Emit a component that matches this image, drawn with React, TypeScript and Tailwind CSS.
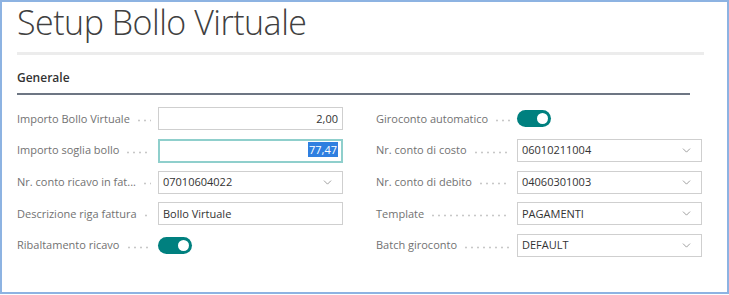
import { ChevronDown } from 'lucide-react';

type Field =
    | { label: string; kind: 'text'; value: string; align?: 'right'; focused?: boolean }
    | { label: string; kind: 'select'; value: string }
    | { label: string; kind: 'toggle' };

const leftFields: Field[] = [
    { label: 'Importo Bollo Virtuale', kind: 'text', value: '2,00', align: 'right' },
    { label: 'Importo soglia bollo', kind: 'text', value: '77,47', align: 'right', focused: true },
    { label: 'Nr. conto ricavo in fat...', kind: 'select', value: '07010604022' },
    { label: 'Descrizione riga fattura', kind: 'text', value: 'Bollo Virtuale' },
    { label: 'Ribaltamento ricavo', kind: 'toggle' },
];

const rightFields: Field[] = [
    { label: 'Giroconto automatico', kind: 'toggle' },
    { label: 'Nr. conto di costo', kind: 'select', value: '06010211004' },
    { label: 'Nr. conto di debito', kind: 'select', value: '04060301003' },
    { label: 'Template', kind: 'select', value: 'PAGAMENTI' },
    { label: 'Batch giroconto', kind: 'select', value: 'DEFAULT' },
];

function Toggle() {
    return (
        <div className="w-[34px] h-[17px] rounded-full bg-[#00807f] flex items-center justify-end pr-[3px]">
            <span className="w-[11px] h-[11px] rounded-full bg-white" />
        </div>
    );
}

function FieldRow({ field }: { field: Field }) {
    return (
        <div className="flex items-center h-[31.7px]">
            {/* Label + dotted leader */}
            <div className="w-[141px] shrink-0 flex items-center pr-[7px]">
                <span className="text-[11px] text-[#727272] whitespace-nowrap">{field.label}</span>
                <span className="flex-1 ml-[6px] mt-[3px] h-[3px] bg-[radial-gradient(circle,#c8c8c8_0.9px,transparent_1.2px)] bg-[length:6px_3px] bg-repeat-x" />
            </div>

            {field.kind === 'toggle' && <Toggle />}

            {field.kind === 'text' && (
                <div
                    className={
                        field.focused
                            ? 'w-[185px] h-[24px] border-2 border-[#8fcfcc] flex items-center px-[3px] text-[11px] text-[#333]'
                            : 'w-[185px] h-[23px] border border-[#cfcfcf] flex items-center px-[4px] text-[11px] text-[#333]'
                    }
                >
                    <span className={field.align === 'right' ? 'ml-auto' : ''}>
                        {field.focused ? (
                            <span className="bg-[#2f7fe0] text-white px-[1px]">{field.value}</span>
                        ) : (
                            field.value
                        )}
                    </span>
                </div>
            )}

            {field.kind === 'select' && (
                <div className="w-[185px] h-[23px] border border-[#cfcfcf] flex items-center justify-between pl-[4px] pr-[8px] text-[11px] text-[#333]">
                    <span>{field.value}</span>
                    <ChevronDown className="w-[13px] h-[13px] text-[#8a8a8a]" strokeWidth={1.5} />
                </div>
            )}
        </div>
    );
}

export default function App() {
    return (
        <div
            className="w-[729px] h-[294px] bg-white border-2 border-[#8db3e2] px-[15px] overflow-hidden"
            style={{ fontFamily: '"Open Sans", "Noto Sans", sans-serif' }}
        >
            {/* Title */}
            <h1 className="text-[34px] font-light text-[#404040] leading-none pt-[3px] tracking-[-0.5px]">
                Setup Bollo Virtuale
            </h1>

            <div className="h-[3px] bg-[#ececec] mt-[13px] mr-[8px]" />

            {/* Section header */}
            <div className="mr-[22px] mt-[9px] border-b-2 border-[#6d7683] pb-[5px]">
                <span className="text-[12px] font-semibold text-[#333]">Generale</span>
            </div>

            {/* Fields */}
            <div className="flex mt-[8px]">
                <div className="w-[359px] flex flex-col">
                    {leftFields.map((f) => (
                        <FieldRow key={f.label} field={f} />
                    ))}
                </div>
                <div className="flex flex-col">
                    {rightFields.map((f) => (
                        <FieldRow key={f.label} field={f} />
                    ))}
                </div>
            </div>
        </div>
    );
}
